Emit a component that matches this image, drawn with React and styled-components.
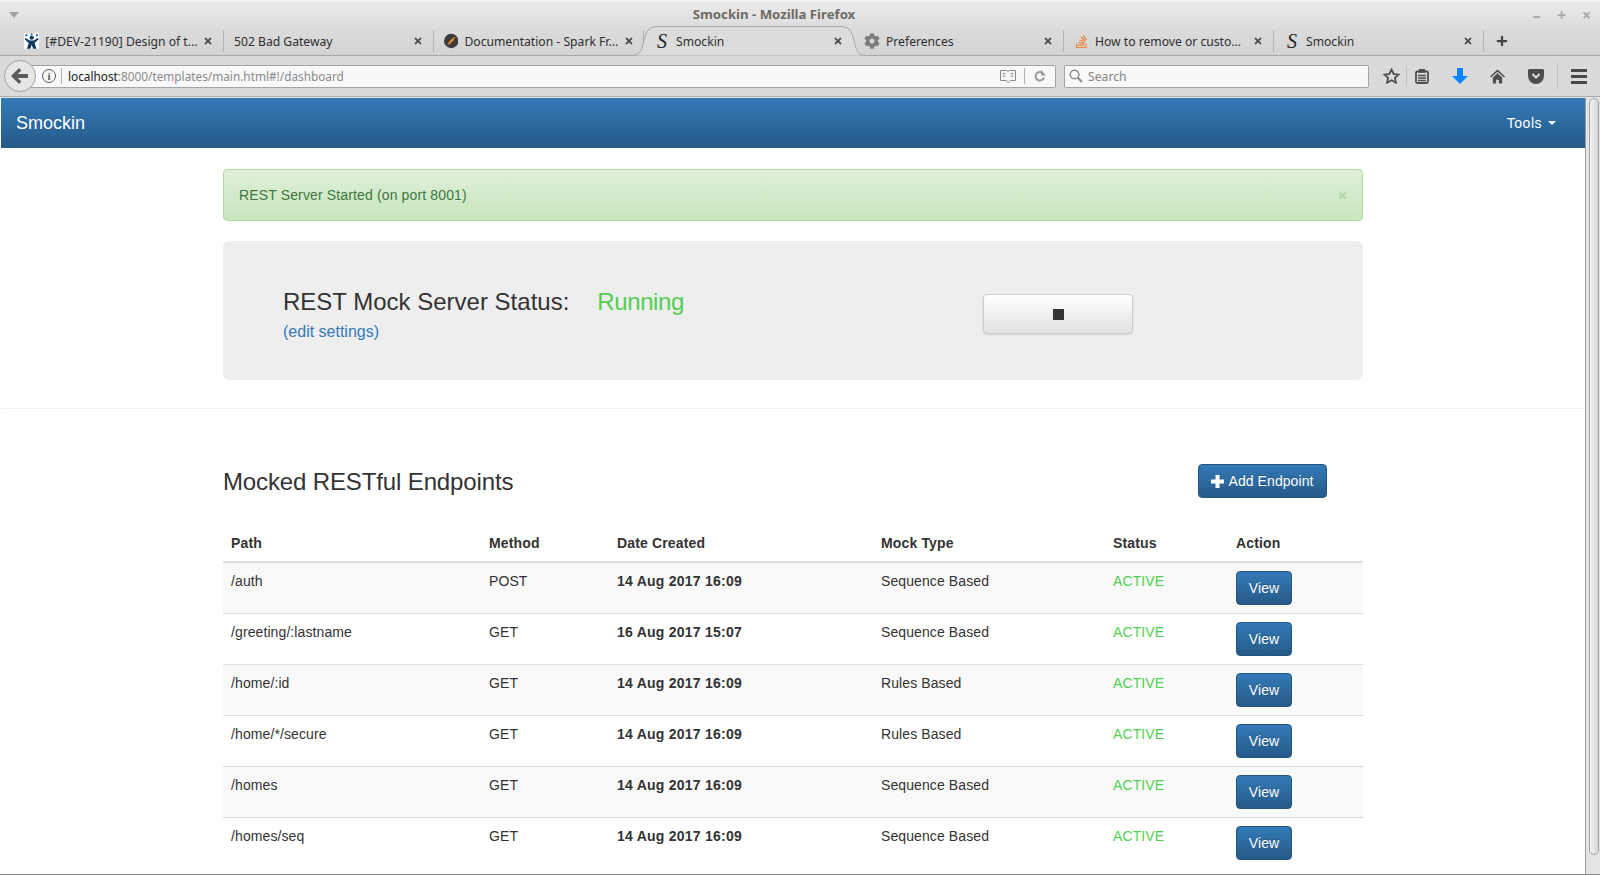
import React from "react";
import styled, { createGlobalStyle } from "styled-components";
import { FaStackOverflow, FaCog, FaTimes, FaPlus } from "react-icons/fa";

const tabs = [
  { title: "[#DEV-21190] Design of t...", icon: "jira" },
  { title: "502 Bad Gateway" },
  { title: "Documentation - Spark Fr...", icon: "spark" },
  { title: "Smockin", icon: "s", active: true },
  { title: "Preferences", icon: "gear" },
  { title: "How to remove or custo...", icon: "so" },
  { title: "Smockin", icon: "s" }
];

const endpoints = [
  { path: "/auth", method: "POST", date: "14 Aug 2017 16:09", type: "Sequence Based" },
  { path: "/greeting/:lastname", method: "GET", date: "16 Aug 2017 15:07", type: "Sequence Based" },
  { path: "/home/:id", method: "GET", date: "14 Aug 2017 16:09", type: "Rules Based" },
  { path: "/home/*/secure", method: "GET", date: "14 Aug 2017 16:09", type: "Rules Based" },
  { path: "/homes", method: "GET", date: "14 Aug 2017 16:09", type: "Sequence Based" },
  { path: "/homes/seq", method: "GET", date: "14 Aug 2017 16:09", type: "Sequence Based" }
];

const TabIcon = ({ kind }) => {
  if (kind === "jira") {
    return (
      <svg width="16" height="16" viewBox="0 0 16 16">
        <rect width="16" height="16" fill="#fff" />
        <circle cx="8" cy="4.5" r="2.2" fill="#12385f" />
        <circle cx="2.5" cy="2" r="1.2" fill="#2a6db0" />
        <circle cx="8" cy="1" r="1" fill="#2a6db0" />
        <circle cx="13.5" cy="2" r="1.2" fill="#2a6db0" />
        <path d="M1.5 5l4.5 2.5h4L14.5 5l.8 1.2L11 10l2 6H9.5L8 12l-1.5 4H3l2-6L.7 6.2z" fill="#12385f" />
      </svg>
    );
  }
  if (kind === "spark") {
    return (
      <svg width="16" height="16" viewBox="0 0 16 16">
        <circle cx="8" cy="8" r="8" fill="#3a3a3a" />
        <path d="M3.5 13C5 9 8 5 12.5 3 11.5 7 8 11 3.5 13z" fill="#e08a2c" />
      </svg>
    );
  }
  if (kind === "gear") return <FaCog size={16} color="#7c7c7c" />;
  if (kind === "so") return <FaStackOverflow size={15} color="#ef8236" />;
  if (kind === "s") return <SerifMark>S</SerifMark>;
  return null;
};

export default function App() {
  return (
    <Screen>
      <GlobalStyle />
      <TitleBar>
        <MenuCaret />
        <WindowTitle>Smockin - Mozilla Firefox</WindowTitle>
        <WindowControls>
          <span>–</span>
          <span>+</span>
          <span>×</span>
        </WindowControls>
      </TitleBar>

      <TabStrip>
        {tabs.map((tab, i) => (
          <Tab key={i} $active={tab.active}>
            {tab.active && (
              <TabShape width="236" height="30" viewBox="0 0 236 30">
                <path
                  d="M0 29.5c8 0 10-3 12-11C14.5 8 16 .5 26 .5h184c10 0 11.5 7.5 14 18 2 8 4 11 12 11"
                  fill="#dcdcdc"
                  stroke="#a8a8a8"
                />
              </TabShape>
            )}
            <TabBody>
              <TabIcon kind={tab.icon} />
              <TabTitle>{tab.title}</TabTitle>
              <TabClose>
                <FaTimes size={10} />
              </TabClose>
            </TabBody>
          </Tab>
        ))}
        <NewTab>
          <FaPlus size={12} />
        </NewTab>
      </TabStrip>

      <Toolbar>
        <BackButton>
          <svg width="18" height="16" viewBox="0 0 18 16">
            <path d="M8 0l2.4 2.4L6.6 6H17v4H6.6l3.8 3.6L8 16 0 8z" fill="#5a5a5a" />
          </svg>
        </BackButton>
        <UrlBar>
          <InfoIcon>i</InfoIcon>
          <UrlDivider />
          <UrlText>
            <b>localhost</b>:8000/templates/main.html#!/dashboard
          </UrlText>
          <UrlActions>
            <svg width="16" height="13" viewBox="0 0 16 13">
              <path d="M.5.5h6l1.5 1 1.5-1h6v10h-5L8 12.5 6.5 10.5h-6z" fill="none" stroke="#8a8a8a" />
              <path d="M2.5 3.5h3M2.5 6h3M10.5 3.5h3M10.5 6h3" stroke="#8a8a8a" />
            </svg>
            <UrlDivider />
            <svg width="12" height="12" viewBox="0 0 12 12">
              <path d="M10 7.5A4.3 4.3 0 1 1 8.8 3" fill="none" stroke="#9a9a9a" strokeWidth="2" />
              <path d="M7 0v5.500h5z" fill="#9a9a9a" />
            </svg>
          </UrlActions>
        </UrlBar>
        <SearchBar>
          <svg width="14" height="14" viewBox="0 0 14 14">
            <circle cx="5.5" cy="5.5" r="4.3" fill="none" stroke="#8f8f8f" strokeWidth="1.6" />
            <path d="M8.5 8.5L13 13" stroke="#8f8f8f" strokeWidth="2.2" />
          </svg>
          <span>Search</span>
        </SearchBar>
        <ToolIcons>
          <ToolIcon $tight>
            <svg width="17" height="16" viewBox="0 0 17 16">
              <path d="M8.5 1.5l2.1 4.500 4.900.6-3.600 3.300 1 4.800-4.400-2.400-4.400 2.400 1-4.800L1.500 6.600l4.900-.6z" fill="none" stroke="#4e4e4e" strokeWidth="1.8" />
            </svg>
          </ToolIcon>
          <ToolDivider />
          <ToolIcon>
            <svg width="14" height="15" viewBox="0 0 14 15">
              <rect x="1" y="2.5" width="12" height="11.5" rx="1.5" fill="none" stroke="#4e4e4e" strokeWidth="1.8" />
              <path d="M4.5 0h5v3h-5zM3 6.5h8M3 9h8M3 11.5h8" stroke="#4e4e4e" strokeWidth="1.3" fill="#4e4e4e" />
            </svg>
          </ToolIcon>
          <ToolIcon>
            <svg width="16" height="16" viewBox="0 0 16 16">
              <path d="M5 0h6v8h5l-8 8-8-8h5z" fill="#0a84ff" />
            </svg>
          </ToolIcon>
          <ToolIcon>
            <svg width="15" height="15" viewBox="0 0 16 15">
              <path d="M8 0l8 7.5-1 1L8 2.300 1 8.500l-1-1z" fill="#4e4e4e" />
              <path d="M8 4l5 4.500V15H9.500v-4h-3v4H3V8.500z" fill="#4e4e4e" />
            </svg>
          </ToolIcon>
          <ToolIcon>
            <svg width="16" height="15" viewBox="0 0 16 15">
              <path d="M1.5 0h13A1.5 1.5 0 0 1 16 1.500V7A8 8 0 0 1 0 7V1.500A1.5 1.5 0 0 1 1.500 0z" fill="#4e4e4e" />
              <path d="M4.5 5L8 8.500 11.500 5" fill="none" stroke="#dadada" strokeWidth="2" />
            </svg>
          </ToolIcon>
          <MenuDivider />
          <Hamburger>
            <i />
            <i />
            <i />
          </Hamburger>
        </ToolIcons>
      </Toolbar>

      <Viewport>
        <Page>
          <Navbar>
            <Brand>Smockin</Brand>
            <NavTools>
              Tools <Caret />
            </NavTools>
          </Navbar>

          <Container>
            <Alert>
              <span>REST Server Started (on port 8001)</span>
              <AlertClose>
                <FaTimes size={11} />
              </AlertClose>
            </Alert>
            <Jumbotron>
              <StatusBlock>
                <StatusLine>
                  REST Mock Server Status:<Running>Running</Running>
                </StatusLine>
                <EditLink>(edit settings)</EditLink>
              </StatusBlock>
              <StopButton>
                <i />
              </StopButton>
            </Jumbotron>
          </Container>

          <Rule />

          <Container>
            <SectionHeader>
              <SectionTitle>Mocked RESTful Endpoints</SectionTitle>
              <AddButton>
                <svg width="13" height="13" viewBox="0 0 13 13">
                  <path d="M4.5 0h4v4.500H13v4H8.500V13h-4V8.500H0v-4h4.500z" fill="#fff" />
                </svg>
                Add Endpoint
              </AddButton>
            </SectionHeader>

            <HeadRow>
              <HeadCell>Path</HeadCell>
              <HeadCell>Method</HeadCell>
              <HeadCell>Date Created</HeadCell>
              <HeadCell>Mock Type</HeadCell>
              <HeadCell>Status</HeadCell>
              <HeadCell>Action</HeadCell>
            </HeadRow>
            {endpoints.map((row, i) => (
              <BodyRow key={i} $striped={i % 2 === 0}>
                <Cell>{row.path}</Cell>
                <Cell>{row.method}</Cell>
                <Cell $bold>{row.date}</Cell>
                <Cell>{row.type}</Cell>
                <Cell $green>ACTIVE</Cell>
                <Cell>
                  <ViewButton>View</ViewButton>
                </Cell>
              </BodyRow>
            ))}
          </Container>
        </Page>
        <Scrollbar>
          <ScrollThumb />
        </Scrollbar>
      </Viewport>
    </Screen>
  );
}

const GlobalStyle = createGlobalStyle`
  html, body {
    margin: 0;
    padding: 0;
    background: #fff;
  }
  * {
    box-sizing: border-box;
  }
`;

const blueGradient = "linear-gradient(to bottom, #337ab7 0%, #265a88 100%)";
const columns = "258px 128px 264px 232px 123px 135px";

const Screen = styled.div`
  width: 1600px;
  height: 875px;
  overflow: hidden;
  display: flex;
  flex-direction: column;
  font-family: "Liberation Sans", Arial, sans-serif;
  font-size: 14px;
  color: #333;
  border-bottom: 1px solid #8c8c8c;
`;
const TitleBar = styled.div`
  height: 27px;
  flex: none;
  display: flex;
  align-items: center;
  justify-content: space-between;
  padding: 2px 7px 0 9px;
  position: relative;
  background: linear-gradient(to bottom, #ececec, #dcdcdc);
  border-top: 1px solid #f4f4f4;
`;
const MenuCaret = styled.div`
  width: 0;
  height: 0;
  border-left: 5px solid transparent;
  border-right: 5px solid transparent;
  border-top: 6px solid #a2a2a2;
`;
const WindowTitle = styled.div`
  position: absolute;
  left: 0;
  right: 52px;
  top: 4px;
  text-align: center;
  font-family: "Noto Sans", sans-serif;
  font-weight: 700;
  font-size: 13.2px;
  color: #6f6a64;
`;
const WindowControls = styled.div`
  display: flex;
  gap: 12px;
  font-family: "Noto Sans", sans-serif;
  font-weight: 700;
  font-size: 16px;
  line-height: 16px;
  color: #a9a9a9;
  span {
    width: 13px;
    text-align: center;
  }
`;
const TabStrip = styled.div`
  height: 29px;
  flex: none;
  display: flex;
  padding-left: 14px;
  background: linear-gradient(to bottom, #dcdcdc, #d4d4d4);
  border-bottom: 1px solid #a8a8a8;
`;
const Tab = styled.div`
  width: 210px;
  height: 28px;
  position: relative;
  flex: none;
  &::after {
    content: "";
    display: ${(p) => (p.$active ? "none" : "block")};
    position: absolute;
    right: 0;
    top: 3px;
    height: 22px;
    width: 1px;
    background: #b4b4b4;
  }
`;
const TabShape = styled.svg`
  position: absolute;
  left: -13px;
  top: -1px;
`;
const TabBody = styled.div`
  position: relative;
  height: 100%;
  display: flex;
  align-items: center;
  gap: 6px;
  padding: 0 9px 0 10px;
  font-family: "Noto Sans", sans-serif;
  font-size: 12.15px;
  color: #2e2e2e;
`;
const TabTitle = styled.span`
  flex: 1;
  white-space: nowrap;
`;
const TabClose = styled.span`
  display: flex;
  width: 12px;
  color: #4a4a4a;
`;
const SerifMark = styled.span`
  width: 16px;
  text-align: center;
  font-family: "Liberation Serif", serif;
  font-style: italic;
  font-size: 20px;
  line-height: 18px;
  color: #222;
`;
const NewTab = styled.div`
  width: 36px;
  display: flex;
  align-items: center;
  justify-content: center;
  color: #454545;
`;
const Toolbar = styled.div`
  height: 42px;
  flex: none;
  display: flex;
  align-items: center;
  padding: 0 0 2px 4px;
  background: #dadada;
  box-shadow: inset 0 -1px 0 #e6e6e6, inset 0 -2px 0 #a8a8a8;
`;
const BackButton = styled.div`
  width: 32px;
  height: 32px;
  flex: none;
  position: relative;
  z-index: 1;
  border-radius: 50%;
  display: flex;
  align-items: center;
  justify-content: center;
  background: #e6e6e6;
  border: 1px solid #a2a2a2;
`;
const UrlBar = styled.div`
  width: 1028px;
  height: 23px;
  margin-left: -8px;
  flex: none;
  display: flex;
  align-items: center;
  padding: 0 9px 0 13px;
  background: #f8f8f8;
  border: 1px solid #a4a4a4;
  border-radius: 0 2px 2px 0;
  font-family: "Noto Sans", sans-serif;
  font-size: 11.8px;
`;
const InfoIcon = styled.span`
  width: 14px;
  height: 14px;
  flex: none;
  border-radius: 50%;
  border: 1px solid #5c5c5c;
  text-align: center;
  font-family: "Liberation Serif", serif;
  font-weight: 700;
  font-size: 11px;
  line-height: 12px;
  color: #5c5c5c;
`;
const UrlDivider = styled.span`
  width: 1px;
  height: 16px;
  margin: 0 6px 0 5px;
  background: #b0b0b0;
`;
const UrlText = styled.div`
  flex: 1;
  color: #8a8a8a;
  b {
    font-weight: 400;
    color: #222;
  }
`;
const UrlActions = styled.div`
  display: flex;
  align-items: center;
  gap: 3px;
`;
const SearchBar = styled.div`
  width: 305px;
  height: 23px;
  margin-left: 8px;
  flex: none;
  display: flex;
  align-items: center;
  gap: 5px;
  padding-left: 4px;
  background: #f8f8f8;
  border: 1px solid #a4a4a4;
  border-radius: 2px;
  font-family: "Noto Sans", sans-serif;
  font-size: 12.2px;
  color: #858585;
`;
const ToolIcons = styled.div`
  flex: 1;
  height: 100%;
  display: flex;
  align-items: center;
  padding-left: 14px;
`;
const ToolIcon = styled.div`
  width: 17px;
  display: flex;
  justify-content: center;
  margin-right: ${(p) => (p.$tight ? "6px" : "21px")};
`;
const ToolDivider = styled.span`
  width: 1px;
  height: 18px;
  margin-right: 6px;
  background: #bcbcbc;
`;
const MenuDivider = styled.span`
  width: 1px;
  height: 28px;
  margin-left: -8px;
  background: #c4c4c4;
`;
const Hamburger = styled.div`
  display: flex;
  flex-direction: column;
  gap: 3px;
  margin-left: 13px;
  i {
    display: block;
    width: 16px;
    height: 3px;
    background: #4a4a4a;
  }
`;
const Viewport = styled.div`
  flex: 1;
  min-height: 0;
  display: flex;
`;
const Page = styled.div`
  width: 1585px;
  flex: none;
  padding-left: 1px;
  overflow: hidden;
  background: #fff;
`;
const Scrollbar = styled.div`
  flex: 1;
  padding: 0 1px 0 3px;
  background: #e4e4e4;
  border-left: 1px solid #9c9c9c;
`;
const ScrollThumb = styled.div`
  height: 757px;
  border: 1px solid #a2a2a2;
  border-radius: 5px;
  background: linear-gradient(to right, #f2f2f2, #d8d8d8);
`;
const Navbar = styled.div`
  height: 50px;
  display: flex;
  align-items: center;
  justify-content: space-between;
  padding: 0 29px 0 15px;
  color: #fff;
  background: ${blueGradient};
`;
const Brand = styled.div`
  font-size: 18px;
`;
const NavTools = styled.div`
  display: flex;
  align-items: center;
  gap: 6px;
  letter-spacing: 0.5px;
`;
const Caret = styled.span`
  width: 0;
  height: 0;
  border-left: 4px solid transparent;
  border-right: 4px solid transparent;
  border-top: 4px solid #fff;
`;
const Container = styled.div`
  width: 1140px;
  margin-left: 222px;
`;
const Alert = styled.div`
  height: 52px;
  margin-top: 21px;
  padding: 0 14px 0 15px;
  display: flex;
  align-items: center;
  justify-content: space-between;
  color: #3c763d;
  letter-spacing: 0.14px;
  text-shadow: 0 1px 0 rgba(255, 255, 255, 0.2);
  background: linear-gradient(to bottom, #dff0d8 0%, #c8e5bc 100%);
  border: 1px solid #b2dba1;
  border-radius: 4px;
`;
const AlertClose = styled.span`
  display: flex;
  color: #b3d4ae;
`;
const Jumbotron = styled.div`
  height: 139px;
  margin-top: 20px;
  padding: 47px 0 0 60px;
  display: flex;
  background: #eee;
  border-radius: 6px;
`;
const StatusBlock = styled.div`
  width: 700px;
  flex: none;
`;
const StatusLine = styled.div`
  font-size: 24px;
  line-height: 27px;
`;
const Running = styled.span`
  margin-left: 28px;
  letter-spacing: -0.4px;
  color: #52cf52;
`;
const EditLink = styled.div`
  margin-top: 5px;
  font-size: 16px;
  line-height: 23px;
  color: #337ab7;
`;
const StopButton = styled.div`
  width: 150px;
  height: 40px;
  margin-top: 6px;
  display: flex;
  align-items: center;
  justify-content: center;
  background: linear-gradient(to bottom, #fff 0%, #e0e0e0 100%);
  border: 1px solid #ccc;
  border-radius: 4px;
  box-shadow: 0 1px 2px rgba(0, 0, 0, 0.12);
  i {
    display: block;
    width: 11px;
    height: 11px;
    background: #333;
  }
`;
const Rule = styled.div`
  height: 1px;
  margin-top: 28px;
  background: #eee;
`;
const SectionHeader = styled.div`
  height: 34px;
  margin-top: 55px;
  padding-right: 36px;
  display: flex;
  align-items: center;
  justify-content: space-between;
`;
const SectionTitle = styled.h2`
  margin: 2px 0 0;
  font-size: 24px;
  font-weight: 400;
  letter-spacing: -0.13px;
`;
const BlueButton = styled.div`
  height: 34px;
  display: flex;
  align-items: center;
  justify-content: center;
  color: #fff;
  text-shadow: 0 -1px 0 rgba(0, 0, 0, 0.2);
  background: ${blueGradient};
  border: 1px solid #245580;
  border-radius: 4px;
`;
const AddButton = styled(BlueButton)`
  width: 129px;
  gap: 4px;
  letter-spacing: 0.08px;
`;
const ViewButton = styled(BlueButton)`
  width: 56px;
`;
const HeadRow = styled.div`
  display: grid;
  grid-template-columns: ${columns};
  margin-top: 27px;
  border-bottom: 2px solid #ddd;
`;
const HeadCell = styled.div`
  padding: 8px;
  line-height: 20px;
  font-weight: 700;
  letter-spacing: 0.15px;
`;
const BodyRow = styled.div`
  height: 51px;
  display: grid;
  grid-template-columns: ${columns};
  background: ${(p) => (p.$striped ? "#f9f9f9" : "#fff")};
  border-bottom: 1px solid #ddd;
  &:last-child {
    border-bottom: none;
  }
`;
const Cell = styled.div`
  padding: 8px;
  line-height: 20px;
  letter-spacing: ${(p) => (p.$bold ? "0.24px" : "0.1px")};
  font-weight: ${(p) => (p.$bold ? 700 : 400)};
  color: ${(p) => (p.$green ? "#52cf52" : "#333")};
`;
